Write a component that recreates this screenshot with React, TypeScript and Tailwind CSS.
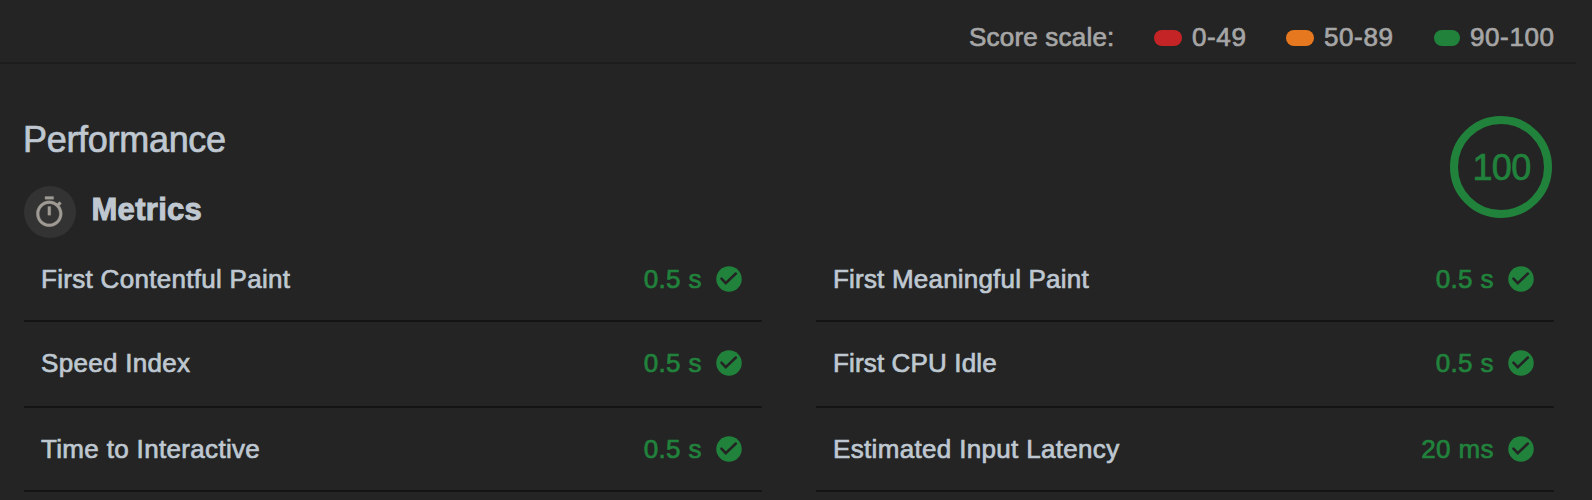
import type { ReactNode } from "react";

type Metric = { label: string; value: string; tracking: string };

const leftMetrics: Metric[] = [
  { label: "First Contentful Paint", value: "0.5 s", tracking: "tracking-[0.3px]" },
  { label: "Speed Index", value: "0.5 s", tracking: "tracking-[0.3px]" },
  { label: "Time to Interactive", value: "0.5 s", tracking: "tracking-[0.33px]" },
];

const rightMetrics: Metric[] = [
  { label: "First Meaningful Paint", value: "0.5 s", tracking: "tracking-[0.2px]" },
  { label: "First CPU Idle", value: "0.5 s", tracking: "tracking-[0.14px]" },
  { label: "Estimated Input Latency", value: "20 ms", tracking: "tracking-[0.33px]" },
];

function CheckIcon() {
  return (
    <svg viewBox="-20 -20 40 40" className="size-[26px] shrink-0">
      <circle r="19.6" fill="#21823c" />
      <path
        d="M-11.6 -0.6L-5 6.4L10.6 -8.4"
        fill="none"
        stroke="#242424"
        strokeWidth="4"
        strokeLinecap="round"
      />
    </svg>
  );
}

function TimerIcon() {
  return (
    <svg
      viewBox="0 0 24 24"
      className="mr-[2px] size-[34.6px] shrink-0"
      fill="#9f9b94"
      stroke="#9f9b94"
      strokeWidth="0.2"
    >
      <path d="M15 1H9v2h6V1zm-4 13h2V8h-2v6zm8.03-6.61l1.42-1.42c-.43-.51-.9-.99-1.41-1.41l-1.42 1.42C16.07 4.74 14.12 4 12 4c-4.97 0-9 4.03-9 9s4.02 9 9 9 9-4.03 9-9c0-2.12-.74-4.07-1.97-5.61zM12 20c-3.87 0-7-3.13-7-7s3.13-7 7-7 7 3.13 7 7-3.13 7-7 7z" />
    </svg>
  );
}

function ScaleItem({ pill, className, children }: { pill: string; className: string; children: ReactNode }) {
  return (
    <span className={`flex shrink-0 items-center gap-[10px] ${className}`}>
      <span className={`mt-[2px] h-4 shrink-0 rounded-[8px] ${pill}`} />
      <span>{children}</span>
    </span>
  );
}

function Column({ metrics }: { metrics: Metric[] }) {
  return (
    <div className="grid w-[738px] grid-rows-[86px_86px_84px]">
      {metrics.map((m) => (
        <div
          key={m.label}
          className="flex items-start justify-between border-b-2 border-[#141414] pt-[26px] pr-5 pl-[17px] leading-[30px] first:pt-7"
        >
          <span className={m.tracking}>{m.label}</span>
          <span className="flex items-center gap-[14px] tracking-[0.4px] text-[#21823c]">
            {m.value}
            <CheckIcon />
          </span>
        </div>
      ))}
    </div>
  );
}

export default function App() {
  return (
    <div className="h-[500px] w-[1592px] overflow-hidden bg-[#242424] font-['Liberation_Sans',Arial,sans-serif] text-[26px] text-[#bfc8d1] [-webkit-text-stroke:0.7px_currentColor]">
      <header className="flex h-16 w-[1576px] items-start justify-end border-b-2 border-[#1d1d1d] pt-[22px] pr-[22px] leading-[30px] whitespace-nowrap text-[#a6a6a6]">
        <span className="w-[185px] tracking-[0.2px]">Score scale:</span>
        <ScaleItem className="w-[132px] tracking-[0.6px]" pill="w-7 bg-[#c52427]">0-49</ScaleItem>
        <ScaleItem className="w-[148px] tracking-[0.6px]" pill="w-7 bg-[#e67820]">50-89</ScaleItem>
        <ScaleItem className="w-[120px] tracking-[0.6px]" pill="w-[26px] bg-[#21823c]">90-100</ScaleItem>
      </header>

      <div className="flex h-[172px] justify-between pr-10 pl-6">
        <div className="pt-[54px]">
          <h1 className="-ml-px h-[68px] pt-px text-[36px] leading-[42px] tracking-[-0.3px]">Performance</h1>
          <div className="flex items-start gap-4">
            <span className="flex size-[52px] items-center justify-center rounded-full bg-[#333333]">
              <TimerIcon />
            </span>
            <h2 className="-ml-[0.5px] pt-[7px] text-[31px] leading-[34px] font-bold tracking-[0.3px] [-webkit-text-stroke-width:1px]">
              Metrics
            </h2>
          </div>
        </div>
        <div className="mt-[52px] flex size-[102px] items-center justify-center rounded-full border-8 border-[#21823c] pt-[2px] pl-px text-[36px] leading-none tracking-[-0.7px] text-[#21823c]">
          100
        </div>
      </div>

      <main className="flex gap-[54px] pl-6">
        <Column metrics={leftMetrics} />
        <Column metrics={rightMetrics} />
      </main>
    </div>
  );
}
